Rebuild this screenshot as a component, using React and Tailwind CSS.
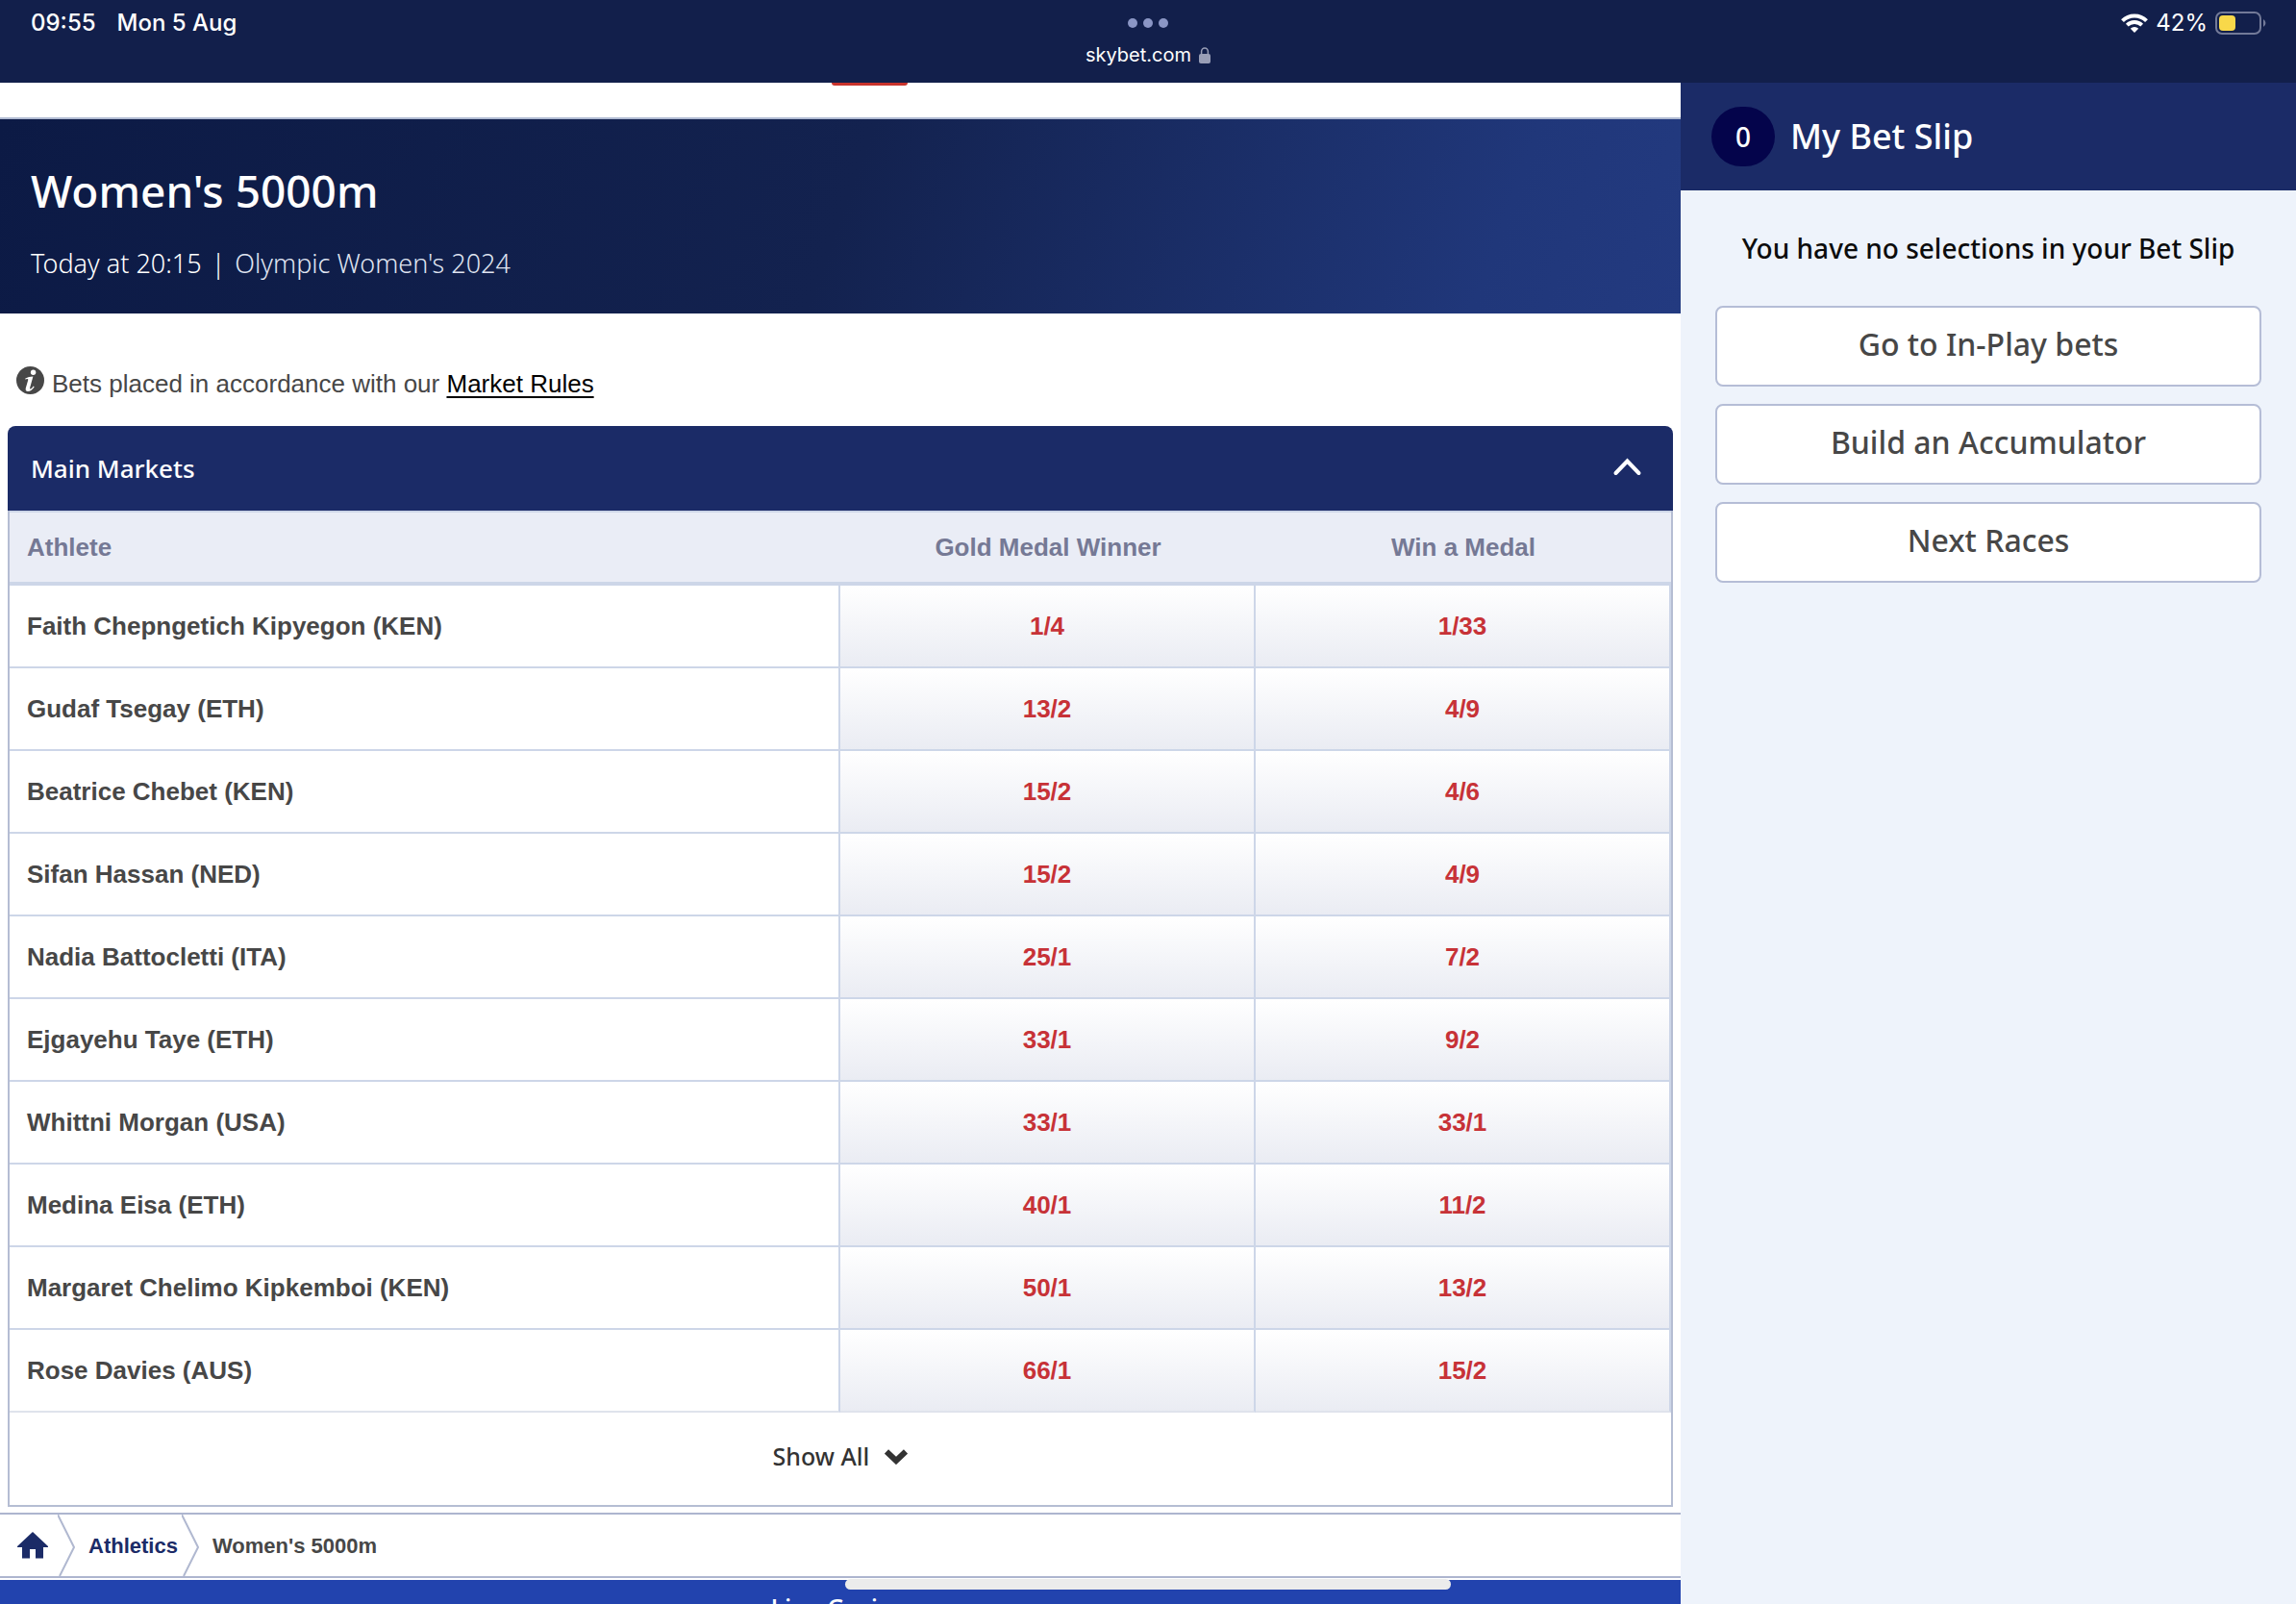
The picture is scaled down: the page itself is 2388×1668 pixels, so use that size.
import React, { useState } from 'react';

const skyFont = "font-['Noto_Sans',sans-serif]";

const athletes = [
  { name: 'Faith Chepngetich Kipyegon (KEN)', gold: '1/4', medal: '1/33' },
  { name: 'Gudaf Tsegay (ETH)', gold: '13/2', medal: '4/9' },
  { name: 'Beatrice Chebet (KEN)', gold: '15/2', medal: '4/6' },
  { name: 'Sifan Hassan (NED)', gold: '15/2', medal: '4/9' },
  { name: 'Nadia Battocletti (ITA)', gold: '25/1', medal: '7/2' },
  { name: 'Ejgayehu Taye (ETH)', gold: '33/1', medal: '9/2' },
  { name: 'Whittni Morgan (USA)', gold: '33/1', medal: '33/1' },
  { name: 'Medina Eisa (ETH)', gold: '40/1', medal: '11/2' },
  { name: 'Margaret Chelimo Kipkemboi (KEN)', gold: '50/1', medal: '13/2' },
  { name: 'Rose Davies (AUS)', gold: '66/1', medal: '15/2' },
];

const slipLinks = ['Go to In-Play bets', 'Build an Accumulator', 'Next Races'];

function WifiIcon() {
  return (
    <svg className="w-7 h-5" viewBox="0 0 28 20" fill="none" stroke="white" strokeWidth="4">
      <path d="M1.5 7.6 A17.6 17.6 0 0 1 26.5 7.6" />
      <path d="M6.3 12.2 A10.9 10.9 0 0 1 21.7 12.2" strokeWidth="3.8" />
      <path d="M14 20 L9.8 15.8 A6 6 0 0 1 18.2 15.8 Z" fill="white" stroke="none" />
    </svg>
  );
}

function BatteryIcon() {
  return (
    <svg className="w-[54px] h-6" viewBox="0 0 54 24" fill="none">
      <rect x="1" y="1" width="46" height="22" rx="6" stroke="#737a98" strokeWidth="2" />
      <rect x="4" y="4" width="17" height="16" rx="4" fill="#f8d84a" />
      <path d="M50 8 a4.5 4.5 0 0 1 0 8 Z" fill="#737a98" />
    </svg>
  );
}

function LockIcon() {
  return (
    <svg className="w-3 h-[17px]" viewBox="0 0 12 17" fill="none">
      <path d="M2.6 8 V4.6 a3.4 3.7 0 0 1 6.8 0 V8" stroke="#999eb6" strokeWidth="1.5" />
      <rect x="0" y="7" width="12" height="10" rx="2" fill="#999eb6" />
    </svg>
  );
}

function InfoIcon() {
  return (
    <svg className="w-[29px] h-[29px] shrink-0" viewBox="0 0 29 29">
      <circle cx="14.5" cy="14.5" r="14.5" fill="#474747" />
      <circle cx="17.6" cy="6.3" r="2.7" fill="white" />
      <path
        d="M9.4 12.4 Q12.8 10.9 17.4 10.6 L14.2 22 Q13.7 23.8 14.7 23.6 Q16.2 23 17.8 20.6 L18.7 21.2 Q15.8 26 12 26 Q9 25.8 9.8 22.4 L12.2 14.2 Q12.6 12.9 11.4 12.9 L9.2 13.4 Z"
        fill="white"
      />
    </svg>
  );
}

function CrumbDivider() {
  return (
    <svg className="w-[18px] h-16 shrink-0" viewBox="0 0 18 64" fill="none">
      <path d="M0 0 L17 34 L2 64" stroke="#b0b8d0" strokeWidth="2" />
    </svg>
  );
}

function StatusBar() {
  return (
    <header className="h-[86px] shrink-0 bg-[#121f4b] text-white font-['Inter',sans-serif] grid grid-cols-3">
      <div className="flex items-start gap-[22px] pl-8 pt-2 text-2xl font-medium">
        <span>09:55</span>
        <span>Mon 5 Aug</span>
      </div>
      <div className="flex flex-col items-center pt-[19px]">
        <div className="flex gap-[6px]">
          <span className="w-[10px] h-[10px] rounded-full bg-[#8b96c5]" />
          <span className="w-[10px] h-[10px] rounded-full bg-[#8b96c5]" />
          <span className="w-[10px] h-[10px] rounded-full bg-[#8b96c5]" />
        </div>
        <div className="flex items-center gap-2 mt-[14px] text-xl leading-7">
          <span>skybet.com</span>
          <LockIcon />
        </div>
      </div>
      <div className="flex items-center justify-end gap-2 h-12 pr-[30px] text-2xl">
        <WifiIcon />
        <span>42%</span>
        <BatteryIcon />
      </div>
    </header>
  );
}

function MarketTable() {
  return (
    <table className="w-full table-fixed border-separate border-spacing-0 text-[26px] font-bold">
      <thead>
        <tr className="h-[78px] bg-[#eaedf6] text-[#757995]">
          <th scope="col" className="p-0 w-1/2 pl-[18px] text-left border-t-2 border-b-4 border-[#cdd6e8]">Athlete</th>
          <th scope="col" className="p-0 w-1/4 border-t-2 border-b-4 border-[#cdd6e8]">Gold Medal Winner</th>
          <th scope="col" className="p-0 w-1/4 border-t-2 border-b-4 border-[#cdd6e8]">Win a Medal</th>
        </tr>
      </thead>
      <tbody>
        {athletes.map((athlete) => (
          <tr key={athlete.name} className="group h-[86px]">
            <th
              scope="row"
              className="p-0 pl-[18px] text-left text-[#474747] border-r-2 border-b-2 border-[#cdd6e8] group-last:border-b-[#dfe3ec]"
            >
              {athlete.name}
            </th>
            {[athlete.gold, athlete.medal].map((odds, i) => (
              <td key={i} className="p-0 border-r-2 border-b-2 border-[#cdd6e8] group-last:border-b-[#dfe3ec]">
                <button
                  type="button"
                  className="block w-full h-[84px] bg-linear-to-b from-white to-[#eaecf3] text-[#c73237] font-bold"
                >
                  {odds}
                </button>
              </td>
            ))}
          </tr>
        ))}
      </tbody>
    </table>
  );
}

function BetSlip() {
  return (
    <aside className={`w-[640px] shrink-0 bg-[#eef3fb] ${skyFont}`}>
      <div className="h-28 flex items-center gap-4 pl-8 bg-[#1b2b67] text-white">
        <span className="w-[66px] h-[62px] rounded-full bg-[#04044b] flex items-center justify-center text-[28px] font-medium">
          0
        </span>
        <h2 className="text-[36px] leading-[48px] font-medium">My Bet Slip</h2>
      </div>
      <p className="pt-10 text-center text-[28px] leading-10 font-medium text-[#0c0c0c]">
        You have no selections in your Bet Slip
      </p>
      <div className="flex flex-col gap-[18px] px-9 pt-10">
        {slipLinks.map((label) => (
          <button
            key={label}
            type="button"
            className="h-[84px] pb-1 rounded-lg border-2 border-[#b5bdd6] bg-white text-[32px] font-medium text-[#474747]"
          >
            {label}
          </button>
        ))}
      </div>
    </aside>
  );
}

export default function App() {
  const [isOpen, setIsOpen] = useState(true);

  return (
    <div className="relative h-screen overflow-hidden flex flex-col bg-white font-['Liberation_Sans',Arial,sans-serif]">
      <StatusBar />

      <div className="flex flex-1 min-h-0">
        <main className="flex-1 min-w-0 flex flex-col">
          <div className="h-[38px] shrink-0 border-b-2 border-[#b0bad2] flex justify-center">
            <span className="w-[79px] h-[3px] ml-[60px] rounded-b-sm bg-[#c8332c]" />
          </div>

          <section
            className={`h-[202px] shrink-0 px-8 pt-[42px] text-white bg-linear-[110deg,#0c1a45_0%,#13224f_50%,#20377a_88%,#233a80_100%] ${skyFont}`}
          >
            <h1 className="text-[46px] leading-[64px] font-medium">Women's 5000m</h1>
            <p className="flex gap-[10px] pt-[26px] text-[27px] leading-9 font-light">
              <span>Today at 20:15</span>
              <span>|</span>
              <span className="text-[#dfe3f0]">Olympic Women's 2024</span>
            </p>
          </section>

          <div className="h-[117px] shrink-0 flex items-start gap-2 pl-[17px] pt-[55px] text-[26px] text-[#474747]">
            <InfoIcon />
            <p className="leading-9">
              Bets placed in accordance with our{' '}
              <a href="#rules" className="text-black underline underline-offset-4 decoration-2">Market Rules</a>
            </p>
          </div>

          <section className="mx-2 shrink-0">
            <button
              type="button"
              aria-expanded={isOpen}
              onClick={() => setIsOpen((value) => !value)}
              className={`w-full h-[88px] px-6 rounded-t-lg flex items-center justify-between bg-[#1b2b67] text-white text-[26px] font-medium ${skyFont}`}
            >
              <span>Main Markets</span>
              <svg className="w-11 h-8" viewBox="0 0 44 32" fill="none" stroke="white" strokeWidth="4" strokeLinecap="round">
                <path d="M8.5 21 L20.5 8.5 L32.5 21" />
              </svg>
            </button>

            {isOpen && (
              <div className="border-2 border-t-0 border-[#b5bdd3]">
                <MarketTable />
                <button
                  type="button"
                  className={`w-full h-24 pb-1 flex items-center justify-center gap-4 text-[25px] font-medium text-[#333333] ${skyFont}`}
                >
                  <span>Show All</span>
                  <svg className="w-6 h-4" viewBox="0 0 24 16" fill="none" stroke="#333333" strokeWidth="6">
                    <path d="M2 2.5 L12 12 L22 2.5" />
                  </svg>
                </button>
              </div>
            )}
          </section>

          <nav
            aria-label="Breadcrumb"
            className="h-[68px] mt-[6px] shrink-0 flex items-center border-y-2 border-[#adb5cf] text-[22px] font-bold"
          >
            <a href="#home" aria-label="Home" className="pl-[18px] pr-[10px]">
              <svg className="w-8 h-7" viewBox="0 0 32 28" fill="#1b2b67">
                <path d="M16 0 L32 15 V16 H27 V27.5 H19 V18 H13 V27.5 H5 V16 H0 V15 Z" />
              </svg>
            </a>
            <CrumbDivider />
            <a href="#athletics" className="pl-[14px] pr-1 text-[#1b2b67]">Athletics</a>
            <CrumbDivider />
            <span className="pl-[14px] text-[#474747]">Women's 5000m</span>
          </nav>

          <footer
            className={`mt-[2px] flex-1 min-h-0 overflow-hidden bg-[#2243ae] pt-3 text-center text-[27px] leading-9 font-medium text-white ${skyFont}`}
          >
            Live Casino
          </footer>
        </main>

        <BetSlip />
      </div>

      {/* home indicator, floats over the page */}
      <div className="absolute bottom-[15px] left-1/2 -translate-x-1/2 w-[630px] h-[11px] rounded-full bg-[#ececec]" />
    </div>
  );
}
